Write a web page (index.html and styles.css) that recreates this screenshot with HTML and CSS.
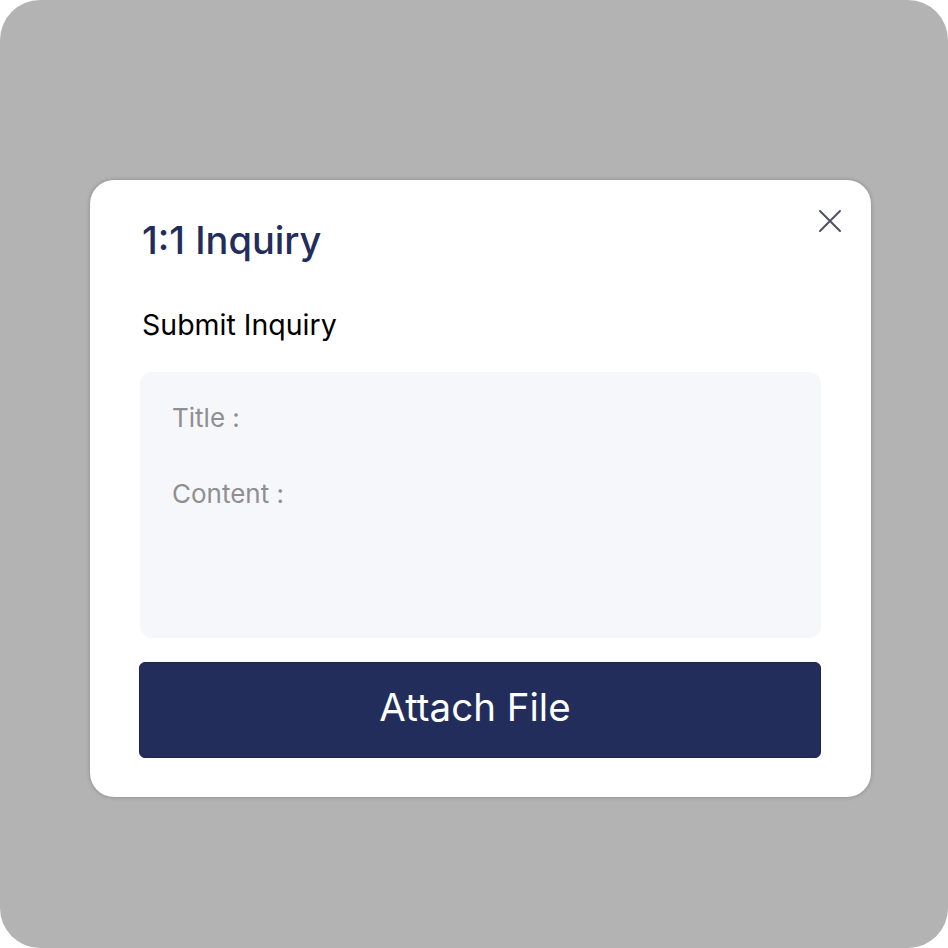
FILE: index.html
```html
<!DOCTYPE html>
<html>
<head>
<meta charset="utf-8">
<link rel="stylesheet" href="styles.css">
</head>
<body>
<div class="frame">
  <div class="modal">
    <button class="close" aria-label="Close">
      <svg width="24" height="24" viewBox="0 0 24 24"><path d="M2 2 L22 22 M22 2 L2 22" stroke="#4f5160" stroke-width="2" stroke-linecap="round" fill="none"/></svg>
    </button>
    <h1 class="title">1:1 Inquiry</h1>
    <h2 class="subtitle">Submit Inquiry</h2>
    <div class="fields">
      <div class="field">Title :</div>
      <div class="field">Content :</div>
    </div>
    <button class="attach">Attach File</button>
  </div>
</div>
</body>
</html>
```
FILE: styles.css
```css
* { box-sizing: border-box; }
html, body { margin: 0; padding: 0; background: #ffffff; }
body { font-family: Inter, "Noto Sans", sans-serif; }
.frame {
  width: 948px;
  height: 948px;
  background: #b3b3b3;
  border-radius: 40px;
  padding: 180px 0 0 90px;
  display: flex;
  align-items: flex-start;
}
.modal {
  position: relative;
  width: 781px;
  height: 617px;
  background: #ffffff;
  border-radius: 24px;
  box-shadow: 0 0 4px rgba(0,0,0,0.25);
  padding: 37px 50px 0 49px;
  display: flex;
  flex-direction: column;
}
.close {
  position: absolute;
  top: 29px;
  right: 29px;
  width: 24px;
  height: 24px;
  padding: 0;
  border: 0;
  background: none;
  display: flex;
}
.title {
  margin: 0 0 0 3px;
  font-size: 38px;
  line-height: 46px;
  font-weight: 500;
  color: #232d5c;
}
.subtitle {
  margin: 45px 0 0 3px;
  font-size: 28.5px;
  line-height: 34px;
  font-weight: 400;
  color: #000000;
}
.fields {
  margin: 30px 0 0 1px;
  height: 266px;
  background: #f6f7fb;
  border-radius: 12px;
  padding: 31px 32px;
  display: flex;
  flex-direction: column;
  gap: 46px;
}
.field {
  font-size: 26px;
  line-height: 30px;
  color: #8f8f8f;
}
.attach {
  margin-top: 24px;
  height: 96px;
  width: 682px;
  background: #232d5b;
  border: 1px solid #1c2550;
  border-radius: 6px;
  color: #ffffff;
  font-family: Inter, "Noto Sans", sans-serif;
  font-size: 38.5px;
  font-weight: 400;
  padding: 0 10px 6px 0;
}
```
